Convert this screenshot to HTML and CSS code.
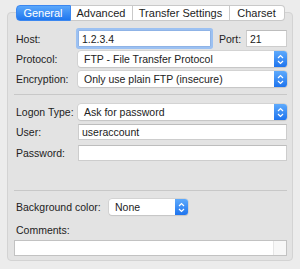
FILE: index.html
```html
<!DOCTYPE html>
<html lang="en">
<head>
    <meta charset="UTF-8">
    <title>Site Settings</title>
    <link rel="stylesheet" href="styles.css">
</head>
<body>
    <div class="tabs">
        <div class="tab active tab-general">General</div>
        <div class="tab tab-advanced">Advanced</div>
        <div class="tab tab-transfer">Transfer Settings</div>
        <div class="tab tab-charset">Charset</div>
    </div>

    <div class="panel">
        <div class="row row-host">
            <label class="label">Host:</label>
            <input class="field field-host" type="text" value="1.2.3.4">
            <label class="label-port">Port:</label>
            <input class="field field-port" type="text" value="21">
        </div>
        <div class="row row-protocol">
            <label class="label">Protocol:</label>
            <div class="select">
                <span class="select-text">FTP - File Transfer Protocol</span>
                <span class="stepper">
                    <svg width="7" height="11" viewBox="0 0 7 11"><path d="M1 4 L3.5 1.5 L6 4 M1 7 L3.5 9.5 L6 7" fill="none" stroke="#fff" stroke-width="1.2"/></svg>
                </span>
            </div>
        </div>
        <div class="row row-encryption">
            <label class="label">Encryption:</label>
            <div class="select">
                <span class="select-text">Only use plain FTP (insecure)</span>
                <span class="stepper">
                    <svg width="7" height="11" viewBox="0 0 7 11"><path d="M1 4 L3.5 1.5 L6 4 M1 7 L3.5 9.5 L6 7" fill="none" stroke="#fff" stroke-width="1.2"/></svg>
                </span>
            </div>
        </div>

        <div class="separator sep-first"></div>

        <div class="row row-logon">
            <label class="label">Logon Type:</label>
            <div class="select">
                <span class="select-text">Ask for password</span>
                <span class="stepper">
                    <svg width="7" height="11" viewBox="0 0 7 11"><path d="M1 4 L3.5 1.5 L6 4 M1 7 L3.5 9.5 L6 7" fill="none" stroke="#fff" stroke-width="1.2"/></svg>
                </span>
            </div>
        </div>
        <div class="row row-user">
            <label class="label">User:</label>
            <input class="field" type="text" value="useraccount">
        </div>
        <div class="row row-password">
            <label class="label">Password:</label>
            <input class="field" type="password" value="">
        </div>

        <div class="separator sep-second"></div>

        <div class="row row-color">
            <label class="label label-wide">Background color:</label>
            <div class="select select-small">
                <span class="select-text">None</span>
                <span class="stepper">
                    <svg width="7" height="11" viewBox="0 0 7 11"><path d="M1 4 L3.5 1.5 L6 4 M1 7 L3.5 9.5 L6 7" fill="none" stroke="#fff" stroke-width="1.2"/></svg>
                </span>
            </div>
        </div>
        <div class="comments-label">Comments:</div>
        <div class="comments">
            <div class="comments-text"></div>
            <div class="comments-scroll"></div>
        </div>
    </div>
</body>
</html>
```

FILE: styles.css
```css
body {
    font-family: "Liberation Sans", Arial, sans-serif;
    margin: 0;
    padding: 5px 7px 0 7px;
    background-color: #ececec;
    color: #222;
    font-size: 10.5px;
}
.tabs {
    display: flex;
    justify-content: center;
    height: 16px;
    margin-bottom: -9px;
    position: relative;
    z-index: 1;
}
.tab {
    box-sizing: border-box;
    height: 16px;
    line-height: 14px;
    font-size: 11px;
    text-align: center;
    background: #fff;
    border: 1px solid #c9c9c9;
    border-left: none;
    color: #1d1d1d;
}
.tab-general {
    width: 55px;
    border-left: 1px solid #c9c9c9;
    border-radius: 4px 0 0 4px;
}
.tab-advanced {
    width: 62px;
}
.tab-transfer {
    width: 97px;
}
.tab-charset {
    width: 55px;
    border-radius: 0 4px 4px 0;
}
.tab.active {
    background: linear-gradient(#5aa7fb, #1f76ee);
    border-color: #3b87f0;
    color: #fff;
}
.panel {
    background: #e3e3e3;
    border: 1px solid #d3d3d3;
    border-radius: 4px;
    padding: 17px 5px 4px 6px;
}
.row {
    display: flex;
    align-items: center;
    height: 16px;
}
.row-host {
    height: 17px;
}
.row-protocol,
.row-encryption,
.row-user {
    margin-top: 4px;
}
.row-logon {
    margin-top: 9px;
}
.row-password {
    margin-top: 5px;
}
.row-color {
    margin-top: 8px;
}
.label {
    width: 62px;
    padding-left: 2px;
    flex-shrink: 0;
}
.label-wide {
    width: 93px;
}
.label-port {
    margin-left: 8px;
    width: 22px;
    margin-right: 5px;
}
.field {
    box-sizing: border-box;
    flex: 1;
    min-width: 0;
    height: 16px;
    border: 1px solid #cdcdcd;
    border-top-color: #bdbdbd;
    background: #fff;
    font-family: inherit;
    font-size: 10.5px;
    color: #1a1a1a;
    padding: 0 3px;
    margin: 0;
    outline: none;
}
.field-host {
    height: 17px;
    border-color: #8fb3e6;
    box-shadow: 0 0 0 2px #9cc1f2;
    border-radius: 1px;
}
.field-port {
    flex: none;
    width: 41px;
    height: 17px;
}
.select {
    box-sizing: border-box;
    flex: 1;
    display: flex;
    height: 16px;
    background: #fff;
    border-radius: 3px;
    box-shadow: 0 0 0 0.5px #c4c4c4, 0 1px 1px rgba(0,0,0,0.12);
    overflow: hidden;
}
.select-small {
    flex: none;
    width: 79px;
}
.select-text {
    flex: 1;
    padding-left: 6px;
    line-height: 16px;
    white-space: nowrap;
    overflow: hidden;
}
.stepper {
    width: 13px;
    display: flex;
    align-items: center;
    justify-content: center;
    background: linear-gradient(#5eaafc, #1e74ee);
}
.separator {
    height: 1px;
    background: #c8c8c8;
}
.sep-first {
    margin-top: 7px;
}
.sep-second {
    margin-top: 29px;
}
.comments-label {
    margin-top: 9px;
    padding-left: 2px;
    height: 13px;
    line-height: 13px;
}
.comments {
    display: flex;
    margin-top: 3px;
    height: 16px;
    box-sizing: border-box;
    border: 1px solid #c2c2c2;
    background: #fff;
}
.comments-text {
    flex: 1;
}
.comments-scroll {
    width: 12px;
    background: #f7f7f7;
    border-left: 1px solid #e6e6e6;
}
```
